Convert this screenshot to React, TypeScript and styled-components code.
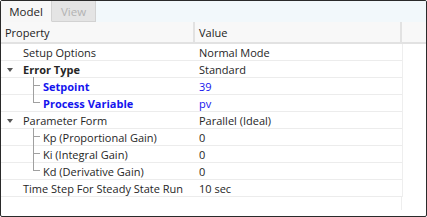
import React from "react";
import styled, { createGlobalStyle } from "styled-components";

const Global = createGlobalStyle`
  html, body { margin: 0; padding: 0; background: #ffffff; }
  * { box-sizing: border-box; }
`;

const Frame = styled.div`
  width: 427px;
  height: 217px;
  border: 1px solid #2a2a2a;
  border-radius: 2px;
  background: #ffffff;
  font-family: "Open Sans", "Noto Sans", sans-serif;
  font-size: 11px;
  color: #222222;
  display: flex;
  flex-direction: column;
  overflow: hidden;
`;

const TabBar = styled.div`
  height: 21px;
  background: #f2f8fb;
  display: flex;
  align-items: stretch;
  flex-shrink: 0;
`;

const Tab = styled.div<{ active?: boolean }>`
  width: ${(p) => (p.active ? "51px" : "44px")};
  display: flex;
  align-items: center;
  justify-content: center;
  background: ${(p) => (p.active ? "#f7f7f7" : "#e4e4e4")};
  color: ${(p) => (p.active ? "#262626" : "#b3b3b3")};
  border-right: 1px solid #d2d2d2;
  border-bottom: 1px solid ${(p) => (p.active ? "#f7f7f7" : "#d2d2d2")};
  font-size: 11.5px;
`;

const Body = styled.div`
  flex: 1;
  display: flex;
  flex-direction: column;
`;

const Row = styled.div<{ header?: boolean }>`
  display: grid;
  grid-template-columns: 194px 207px 1fr;
  height: ${(p) => (p.header ? "22px" : "17px")};
  flex-shrink: 0;
`;

const Cell = styled.div<{ header?: boolean }>`
  display: flex;
  align-items: center;
  white-space: nowrap;
  padding-left: 4px;
  background: ${(p) => (p.header ? "#f8f8f8" : "#ffffff")};
  border-right: ${(p) => (p.header ? "2px solid #e2e2e2" : "none")};
  border-bottom: ${(p) => (p.header ? "2px solid #e2e2e2" : "1px solid #ececec")};
  position: relative;
`;

const Gutter = styled.div<{ header?: boolean }>`
  border-left: ${(p) => (p.header ? "none" : "1px solid #eeeeee")};
  background: ${(p) => (p.header ? "#f8f8f8" : "#ffffff")};
  border-bottom: ${(p) => (p.header ? "2px solid #e2e2e2" : "none")};
`;

const Filler = styled.div`
  flex: 1;
  display: grid;
  grid-template-columns: 401px 1fr;
`;

const FillerGap = styled.div`
  border-right: 1px solid #eeeeee;
  margin-bottom: 6px;
`;

const Label = styled.span<{ indent: number; bold?: boolean; blue?: boolean }>`
  margin-left: ${(p) => p.indent}px;
  font-weight: ${(p) => (p.bold ? 700 : 400)};
  color: ${(p) => (p.blue ? "#1414ee" : "#262626")};
`;

const Value = styled.span<{ blue?: boolean }>`
  color: ${(p) => (p.blue ? "#1414ee" : "#262626")};
`;

const Arrow = styled.span`
  position: absolute;
  left: 6px;
  top: 7px;
  width: 0;
  height: 0;
  border-left: 3.5px solid transparent;
  border-right: 3.5px solid transparent;
  border-top: 4px solid #555555;
`;

const TreeLine = styled.span<{ lastChild?: boolean }>`
  position: absolute;
  left: 32px;
  top: -1px;
  height: ${(p) => (p.lastChild ? "9px" : "18px")};
  width: 7px;
  border-left: 1px solid #a0a0a0;
  &:after {
    content: "";
    position: absolute;
    left: 0;
    top: 8px;
    width: 6px;
    border-top: 1px solid #a0a0a0;
  }
`;

type Item = {
  label: string;
  value: string;
  level: number;
  expander?: boolean;
  child?: "mid" | "last";
  bold?: boolean;
  blue?: boolean;
};

const items: Item[] = [
  { label: "Setup Options", value: "Normal Mode", level: 1 },
  { label: "Error Type", value: "Standard", level: 1, expander: true, bold: true },
  { label: "Setpoint", value: "39", level: 2, child: "mid", bold: true, blue: true },
  { label: "Process Variable", value: "pv", level: 2, child: "last", bold: true, blue: true },
  { label: "Parameter Form", value: "Parallel (Ideal)", level: 1, expander: true },
  { label: "Kp (Proportional Gain)", value: "0", level: 2, child: "mid" },
  { label: "Ki (Integral Gain)", value: "0", level: 2, child: "mid" },
  { label: "Kd (Derivative Gain)", value: "0", level: 2, child: "last" },
  { label: "Time Step For Steady State Run", value: "10 sec", level: 1 },
];

export default function App() {
  return (
    <>
      <Global />
      <Frame>
        <TabBar>
          <Tab active>Model</Tab>
          <Tab>View</Tab>
        </TabBar>
        <Body>
          <Row header>
            <Cell header>Property</Cell>
            <Cell header>Value</Cell>
            <Gutter header />
          </Row>
          {items.map((it) => (
            <Row key={it.label}>
              <Cell>
                {it.expander && <Arrow />}
                {it.child && <TreeLine lastChild={it.child === "last"} />}
                <Label indent={it.level === 1 ? 18 : 38} bold={it.bold} blue={it.blue}>
                  {it.label}
                </Label>
              </Cell>
              <Cell>
                <Value blue={it.blue}>{it.value}</Value>
              </Cell>
              <Gutter />
            </Row>
          ))}
          <Filler>
            <FillerGap />
            <div />
          </Filler>
        </Body>
      </Frame>
    </>
  );
}
